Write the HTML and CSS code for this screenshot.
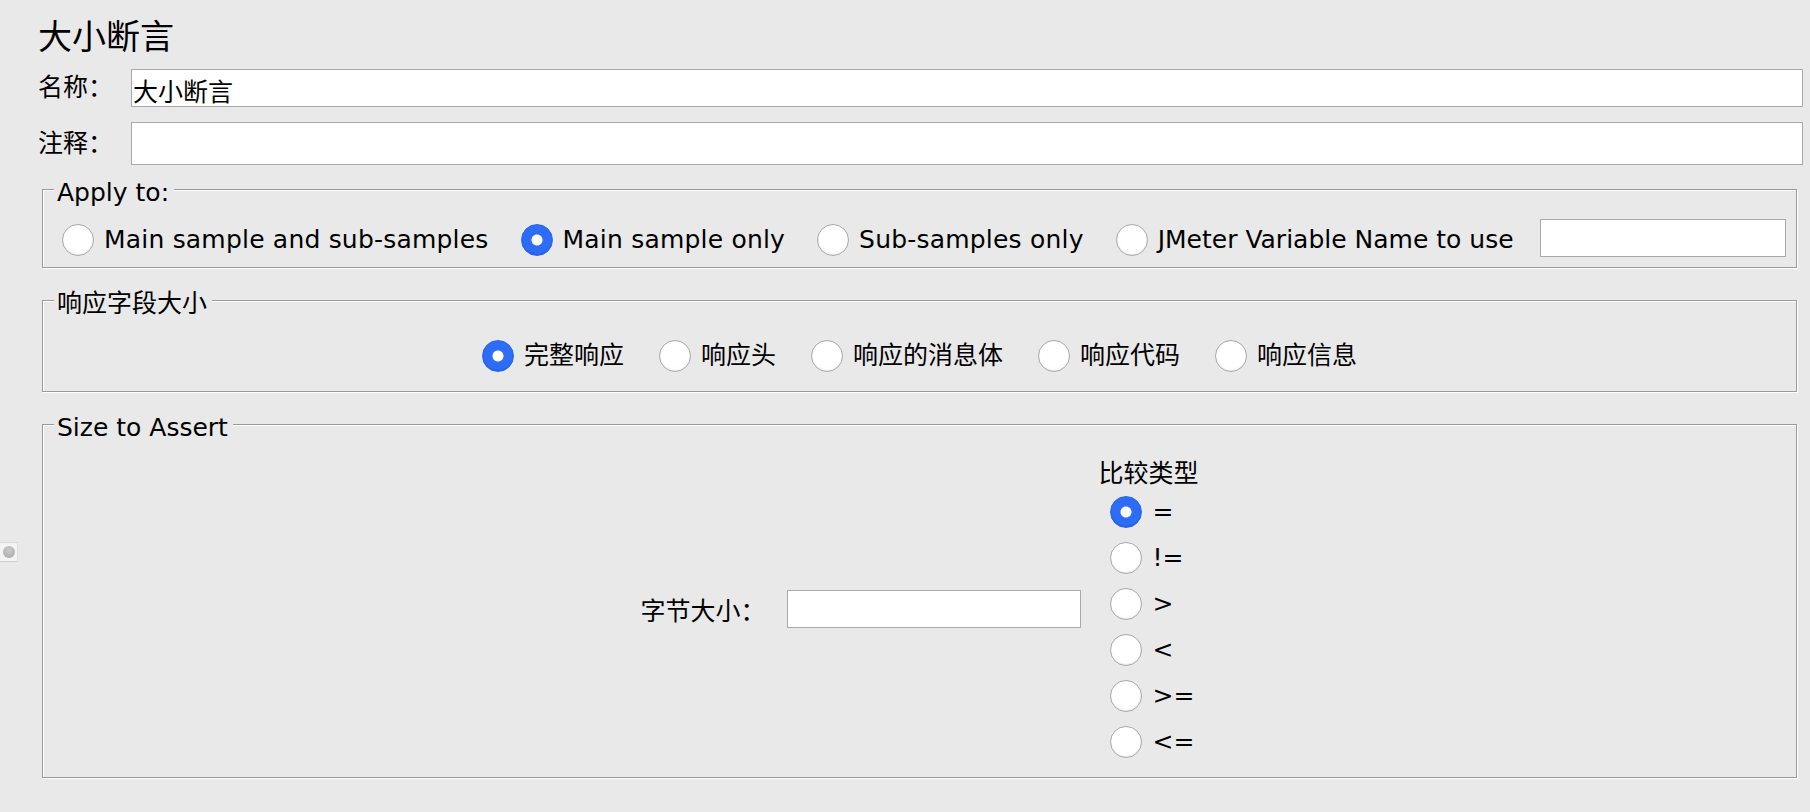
FILE: index.html
```html
<!DOCTYPE html>
<html lang="zh-CN">
<head>
<meta charset="utf-8">
<title>大小断言</title>
<link rel="stylesheet" href="styles.css">
</head>
<body>
<div class="panel">
  <div class="title">大小断言</div>

  <div class="field-row name-row">
    <label class="field-label">名称：</label>
    <input class="text-input" type="text" value="大小断言">
  </div>

  <div class="field-row comment-row">
    <label class="field-label">注释：</label>
    <textarea class="text-area"></textarea>
  </div>

  <section class="group apply-group">
    <div class="group-title">Apply to:</div>
    <div class="apply-row">
      <label class="radio-item"><input class="radio" type="radio" name="apply"><span>Main sample and sub-samples</span></label>
      <label class="radio-item"><input class="radio" type="radio" name="apply" checked><span>Main sample only</span></label>
      <label class="radio-item"><input class="radio" type="radio" name="apply"><span>Sub-samples only</span></label>
      <label class="radio-item var-item"><input class="radio" type="radio" name="apply"><span>JMeter Variable Name to use</span></label>
      <input class="text-input var-input" type="text">
    </div>
  </section>

  <section class="group field-group">
    <div class="group-title">响应字段大小</div>
    <div class="field-choice-row">
      <label class="radio-item"><input class="radio" type="radio" name="field" checked><span>完整响应</span></label>
      <label class="radio-item"><input class="radio" type="radio" name="field"><span>响应头</span></label>
      <label class="radio-item"><input class="radio" type="radio" name="field"><span>响应的消息体</span></label>
      <label class="radio-item"><input class="radio" type="radio" name="field"><span>响应代码</span></label>
      <label class="radio-item"><input class="radio" type="radio" name="field"><span>响应信息</span></label>
    </div>
  </section>

  <section class="group size-group">
    <div class="group-title">Size to Assert</div>
    <div class="size-row">
      <label class="size-label">字节大小：</label>
      <input class="text-input size-input" type="text">
      <div class="compare-col">
        <div class="compare-title">比较类型</div>
        <label class="compare-item"><input class="radio" type="radio" name="cmp" checked><span>=</span></label>
        <label class="compare-item"><input class="radio" type="radio" name="cmp"><span>!=</span></label>
        <label class="compare-item"><input class="radio" type="radio" name="cmp"><span>&gt;</span></label>
        <label class="compare-item"><input class="radio" type="radio" name="cmp"><span>&lt;</span></label>
        <label class="compare-item"><input class="radio" type="radio" name="cmp"><span>&gt;=</span></label>
        <label class="compare-item"><input class="radio" type="radio" name="cmp"><span>&lt;=</span></label>
      </div>
    </div>
  </section>
</div>
<div class="divider-knob"><span class="knob-dot"></span></div>
</body>
</html>
```

FILE: styles.css
```css
html, body {
  margin: 0;
  padding: 0;
  background: #e9e9e9;
}

body {
  position: relative;
  width: 1810px;
  height: 812px;
  overflow: hidden;
  font-family: "DejaVu Sans", "Noto Sans CJK SC", sans-serif;
  font-size: 25px;
  line-height: 30px;
  color: #000;
}

.panel {
  padding: 15px 7px 0 38px;
}

.title {
  font-family: "Noto Sans CJK SC", sans-serif;
  font-size: 34px;
  line-height: 40px;
  height: 40px;
}

.field-row {
  display: flex;
  align-items: center;
}

.name-row {
  margin-top: 14px;
}

.comment-row {
  margin-top: 15px;
}

.field-label {
  width: 93px;
  flex: none;
}

.text-input,
.text-area {
  box-sizing: border-box;
  border: 1px solid #a9a9a9;
  border-radius: 0;
  background: #fff;
  font-family: "DejaVu Sans", "Noto Sans CJK SC", sans-serif;
  font-size: 25px;
  color: #000;
  outline: none;
  margin: 0;
}

.name-row .text-input {
  flex: 1;
  height: 38px;
  padding: 3px 0 0 1px;
}

.text-area {
  flex: 1;
  height: 43px;
  resize: none;
  overflow: hidden;
  padding: 2px;
  display: block;
}

/* etched titled groups */
.group {
  position: relative;
  box-sizing: border-box;
  margin: 0 6px 0 4px;
  border: 1px solid #9a9a9a;
  box-shadow: inset 1px 1px 0 #fff, 1px 1px 0 #fff;
}

.group-title {
  position: absolute;
  left: 11px;
  top: -12px;
  padding: 0 5px 0 3px;
  background: #e9e9e9;
  line-height: 30px;
  white-space: nowrap;
}

.apply-group {
  margin-top: 24px;
  padding: 29px 10px 10px 19px;
}

.field-group {
  margin-top: 32px;
  padding: 39px 10px 19px 10px;
}

.size-group {
  margin-top: 32px;
  height: 354px;
  padding-top: 22px;
  display: flex;
  align-items: center;
  justify-content: center;
}

/* radio controls */
.radio {
  -webkit-appearance: none;
  appearance: none;
  box-sizing: border-box;
  width: 32px;
  height: 32px;
  margin: 0;
  flex: none;
  border-radius: 50%;
  border: 1px solid #a9a9a9;
  background: radial-gradient(circle at 50% 40%, #ffffff 0 55%, #f6f6f6 100%);
  box-shadow: inset 0 -1px 1px rgba(0, 0, 0, 0.06);
}

.radio:checked {
  border-color: #2866ee;
  background: radial-gradient(circle at 50% 50%, #ffffff 0 5px, #2c6cf6 6px);
  box-shadow: inset 0 -1px 1px rgba(0, 0, 0, 0.12);
}

.radio-item {
  display: flex;
  align-items: center;
  gap: 10px;
  white-space: nowrap;
}

.apply-row {
  display: flex;
  align-items: center;
  gap: 32px;
  height: 38px;
}

.apply-row .radio-item {
  padding-top: 4px;
  letter-spacing: 0.2px;
  flex: none;
}

.apply-row .var-item {
  letter-spacing: 0;
}

.var-input {
  margin-left: -6px;
  width: 247px;
  min-width: 0;
  flex: 0 1 247px;
  height: 38px;
}

.field-choice-row {
  display: flex;
  justify-content: center;
  align-items: center;
  gap: 35px;
  height: 32px;
}

.size-row {
  display: flex;
  align-items: center;
}

.size-label {
  white-space: nowrap;
}

.size-input {
  width: 294px;
  height: 38px;
  margin: 0 18px 6px 21px;
}

.compare-col {
  display: flex;
  flex-direction: column;
  width: 100px;
}

.compare-title {
  white-space: nowrap;
  height: 30px;
}

.compare-item {
  display: flex;
  align-items: center;
  gap: 11px;
  height: 46px;
  padding-left: 11px;
}

/* split-pane divider knob at the left edge */
.divider-knob {
  position: absolute;
  left: 0;
  top: 542px;
  width: 18px;
  height: 20px;
  box-sizing: border-box;
  background: #f4f4f4;
  border-top: 1px solid #dadada;
  border-bottom: 1px solid #cfcfcf;
  border-right: 1px solid #dedede;
  display: flex;
  align-items: center;
  justify-content: center;
}

.knob-dot {
  width: 12px;
  height: 12px;
  border-radius: 50%;
  background: radial-gradient(circle at 50% 35%, #c9c9c9, #a9a9a9);
}
```
